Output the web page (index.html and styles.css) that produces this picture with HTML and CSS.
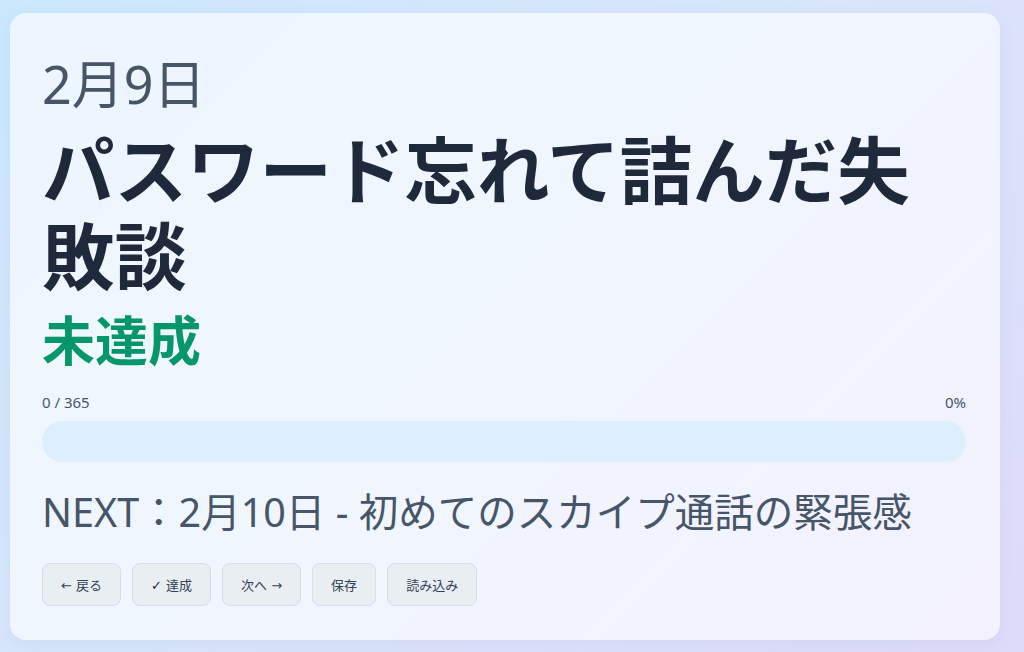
FILE: index.html
```html
<!DOCTYPE html>
<html lang="ja">
<head>
<meta charset="utf-8">
<title>365日チャレンジ</title>
<link rel="stylesheet" href="styles.css">
</head>
<body>
<main class="card">
  <div class="date">2月9日</div>
  <h1 class="title">パスワード忘れて詰んだ失敗談</h1>
  <div class="status">未達成</div>
  <div class="progress">
    <div class="progress-meta">
      <span>0 / 365</span>
      <span>0%</span>
    </div>
    <div class="progress-track"><div class="progress-fill" style="width:0%"></div></div>
  </div>
  <div class="next">NEXT：2月10日 - 初めてのスカイプ通話の緊張感</div>
  <div class="actions">
    <button class="btn">← 戻る</button>
    <button class="btn"><span class="check">✓</span> 達成</button>
    <button class="btn">次へ →</button>
    <button class="btn">保存</button>
    <button class="btn">読み込み</button>
  </div>
</main>
</body>
</html>
```
FILE: styles.css
```css
* { box-sizing: border-box; }

html, body { height: 100%; }

body {
  margin: 0;
  padding: 13px 24px 12px 10px;
  font-family: "Noto Sans", "Noto Sans CJK JP", sans-serif;
  background: linear-gradient(135deg, #cbe8fd 0%, #d9e6fb 50%, #dedafa 100%);
  overflow: hidden;
}

.card {
  height: 100%;
  padding: 32px 34px 34px 32px;
  border-radius: 16px;
  background: rgba(255, 255, 255, 0.62);
  box-shadow: 0 4px 18px rgba(100, 116, 170, 0.08);
}

.date {
  font-size: 52px;
  line-height: 1.2;
  color: #475569;
  margin-top: 8px;
}

.title {
  margin: 12px 0 0;
  font-size: 72.5px;
  line-height: 86px;
  font-weight: 700;
  color: #1e293b;
}

.status {
  margin-top: 10px;
  font-size: 53px;
  line-height: 1.2;
  font-weight: 700;
  color: #059669;
}

.progress { margin-top: 19px; }

.progress-meta {
  display: flex;
  justify-content: space-between;
  font-size: 15px;
  line-height: 20px;
  color: #475569;
}

.progress-track {
  margin-top: 9px;
  height: 41px;
  border-radius: 999px;
  background: #dbeffc;
  overflow: hidden;
}

.progress-fill {
  height: 100%;
  background: #10b981;
}

.next {
  margin-top: 27px;
  font-size: 39.5px;
  line-height: 1.2;
  color: #475569;
}

.actions {
  display: flex;
  gap: 11px;
  margin-top: 27px;
}

.btn {
  height: 43px;
  padding: 0 18px;
  border: 1px solid #d6dde5;
  border-radius: 8px;
  background: #e9eef3;
  color: #334155;
  font-family: "DejaVu Sans", "Noto Sans CJK JP", sans-serif;
  font-size: 13px;
}

.check {
  font-weight: 700;
  color: #1e293b;
}
```
